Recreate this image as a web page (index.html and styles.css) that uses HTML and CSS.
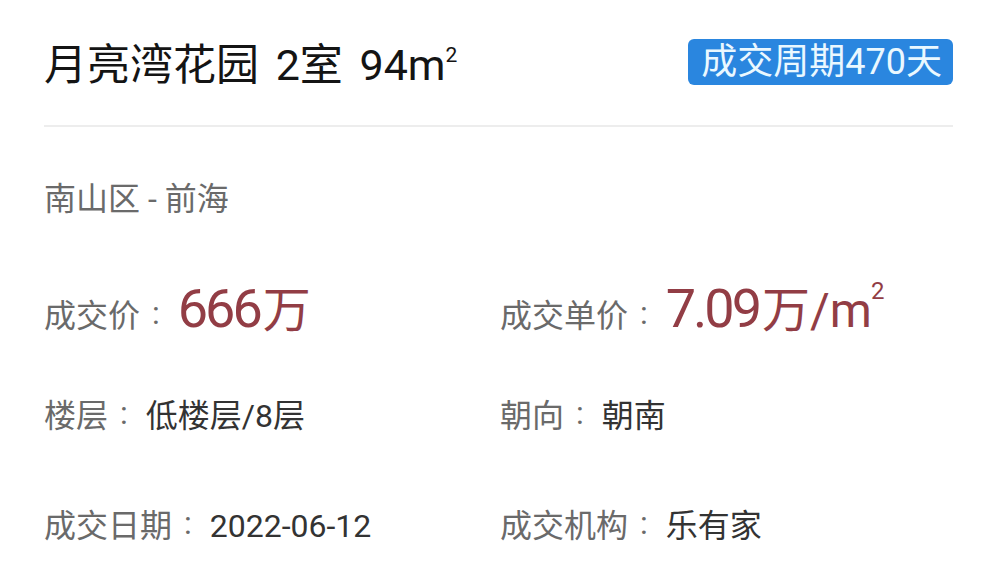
FILE: index.html
```html
<!DOCTYPE html>
<html lang="zh-CN">
<head>
    <meta charset="UTF-8">
    <meta name="viewport" content="width=device-width, initial-scale=1.0">
    <title>成交详情</title>
    <link rel="stylesheet" href="styles.css">
</head>
<body>
<div id="card">
    <div class="header">
        <h1 class="title">月亮湾花园 2室 94m<sup>2</sup></h1>
        <span class="badge">成交周期470天</span>
    </div>

    <p class="area">南山区 - 前海</p>

    <div class="info">
        <div class="item first">
            <span class="label">成交价<span class="colon">:</span></span><span class="price"><span class="num">666</span>万</span>
        </div>
        <div class="item first">
            <span class="label">成交单价<span class="colon">:</span></span><span class="price"><span class="num">7.09</span>万/m<sup>2</sup></span>
        </div>
        <div class="item">
            <span class="label">楼层<span class="colon">:</span></span><span class="value">低楼层/8层</span>
        </div>
        <div class="item">
            <span class="label">朝向<span class="colon">:</span></span><span class="value">朝南</span>
        </div>
        <div class="item">
            <span class="label">成交日期<span class="colon">:</span></span><span class="value">2022-06-12</span>
        </div>
        <div class="item">
            <span class="label">成交机构<span class="colon">:</span></span><span class="value">乐有家</span>
        </div>
    </div>
</div>
</body>
</html>
```

FILE: styles.css
```css
* {
    padding: 0;
    margin: 0;
    box-sizing: border-box;
}
body {
    background: #ffffff;
    font-family: Roboto, "Noto Sans CJK SC", sans-serif;
}
#card {
    width: 985px;
    padding: 0 32px 0 44px;
}
.header {
    display: flex;
    justify-content: space-between;
    align-items: center;
    height: 127px;
    border-bottom: 2px solid #ededed;
}
.title {
    font-size: 43px;
    font-weight: 400;
    color: #141414;
    word-spacing: 6px;
    margin-top: -4px;
}
sup {
    line-height: 0;
}
.title sup {
    font-size: 21px;
    vertical-align: 18px;
    margin-left: 0;
}
.badge {
    display: block;
    background-color: #2a86df;
    color: #eaf8ff;
    font-size: 36px;
    line-height: 46px;
    padding: 0 11px 0 13px;
    border-radius: 6px;
    margin-top: -2px;
}
.area {
    margin-top: 48px;
    font-size: 32px;
    line-height: 48px;
    color: #6a6a6a;
}
.info {
    display: grid;
    grid-template-columns: 456px 1fr;
    grid-template-rows: 102px 110px 100px;
    margin-top: 33px;
}
.item {
    padding-top: 32px;
    line-height: 46px;
    white-space: nowrap;
}
.item.first {
    padding-top: 30px;
}
.label {
    font-size: 32px;
    color: #6a6a6a;
}
.colon {
    margin: 0 18px 0 12px;
    vertical-align: 3px;
}
.value {
    font-size: 32px;
    color: #333333;
}
.price {
    font-size: 48px;
    color: #923d45;
}
.price .num {
    font-size: 54px;
    letter-spacing: -3px;
    margin-right: 3px;
}
.price sup {
    font-size: 24px;
    vertical-align: 28px;
    margin-left: -1px;
}
```
